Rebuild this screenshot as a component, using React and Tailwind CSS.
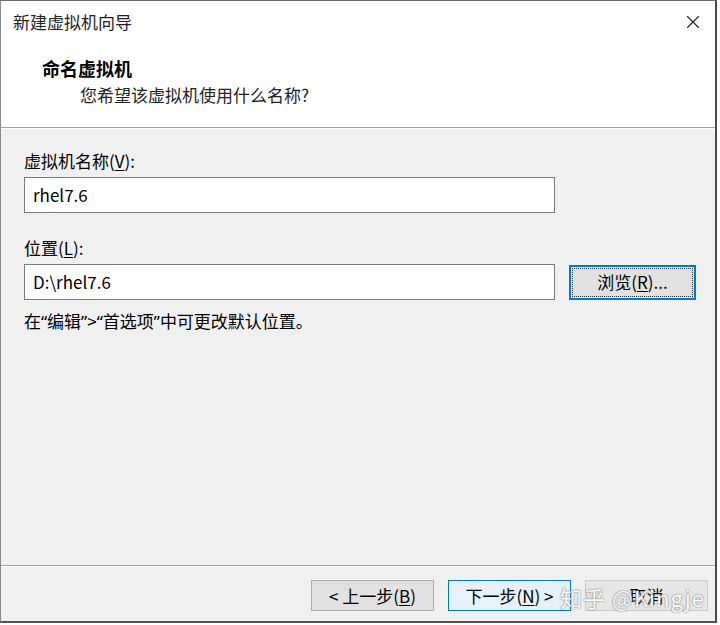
import { X } from "lucide-react";

const font = "font-['Noto_Sans_CJK_SC','Noto_Sans',sans-serif]";

const Key = ({ children }) => <span className="underline underline-offset-2">{children}</span>;
const Q = ({ children }) => <span className="font-['Noto_Sans',sans-serif]">{children}</span>;

const Field = ({ value, className = "" }) => (
  <div
    className={`h-[36px] shrink-0 border border-[#7a7a7a] bg-white flex items-center pl-[8px] text-[17px] text-black ${className}`}
  >
    {value}
  </div>
);

const WinButton = ({ children, variant = "default" }) => {
  const styles = {
    default: "border border-[#adadad] bg-[#e1e1e1]",
    primary: "border border-[#0078d7] bg-[#e5f1fb]",
    muted: "border border-[#cccccc] bg-[#e6e6e6]",
  };
  return (
    <button
      className={`w-[123px] h-[31px] flex items-center justify-center text-[17px] text-black ${styles[variant]}`}
    >
      {children}
    </button>
  );
};

export default function App() {
  return (
    <div className={`w-[720px] h-[625px] bg-white ${font}`}>
      <div className="w-[717px] h-[623px] border border-l-[#8a8a8a] border-t-[#6a6a6a] border-r-2 border-r-[#4a4a4a] border-b-2 border-b-[#555555] flex flex-col">
        {/* title bar */}
        <div className="h-[42px] bg-white flex items-center justify-between pl-[12px] pr-[8px]">
          <span className="text-[17px] text-[#222]">新建虚拟机向导</span>
          <X size={22} strokeWidth={1.2} className="text-[#222] mr-[3px]" />
        </div>

        {/* header */}
        <div className="h-[84px] bg-white pl-[41px] pt-[12px]">
          <div className="text-[18px] font-bold text-black leading-[26px]">命名虚拟机</div>
          <div className="text-[17px] text-[#222] leading-[26px] pl-[38px] mt-[1px]">
            您希望该虚拟机使用什么名称?
          </div>
        </div>
        <div className="border-t border-[#a0a0a0]" />
        <div className="border-t border-white" />

        {/* body */}
        <div className="flex-1 bg-[#f0f0f0] px-[23px] pt-[20px] text-[17px] text-black">
          <div className="leading-[24px]">
            虚拟机名称(<Key>V</Key>):
          </div>
          <Field value="rhel7.6" className="mt-[4px] w-[531px]" />

          <div className="leading-[24px] mt-[23px]">
            位置(<Key>L</Key>):
          </div>
          <div className="flex items-center mt-[4px] gap-[14px]">
            <Field value="D:\rhel7.6" className="w-[531px]" />
            <button className="w-[127px] h-[35px] shrink-0 border-2 border-[#0078d7] bg-[#e1e1e1] p-[1px]">
              <span className="w-full h-full flex items-center justify-center outline-1 outline-dotted outline-[#333] -outline-offset-1 text-[17px]">
                浏览(<Key>R</Key>)...
              </span>
            </button>
          </div>
          <div className="leading-[24px] mt-[9px]">
            在<Q>“</Q>编辑<Q>”</Q>&gt;<Q>“</Q>首选项<Q>”</Q>中可更改默认位置。
          </div>
        </div>

        {/* footer */}
        <div className="border-t border-[#a0a0a0]" />
        <div className="border-t border-white" />
        <div className="h-[54px] bg-[#f0f0f0] flex items-start justify-end pt-[13px] pr-[7px] gap-[14px] relative">
          <WinButton>
            &lt; 上一步(<Key>B</Key>)
          </WinButton>
          <WinButton variant="primary">
            下一步(<Key>N</Key>) &gt;
          </WinButton>
          <WinButton variant="muted">取消</WinButton>
          <span className="absolute right-[10px] top-[14px] text-[22px] text-white tracking-[1px] [text-shadow:0_0_2px_#777,0_0_1px_#777] opacity-90">
            知乎 @Kingje
          </span>
        </div>
      </div>
    </div>
  );
}
